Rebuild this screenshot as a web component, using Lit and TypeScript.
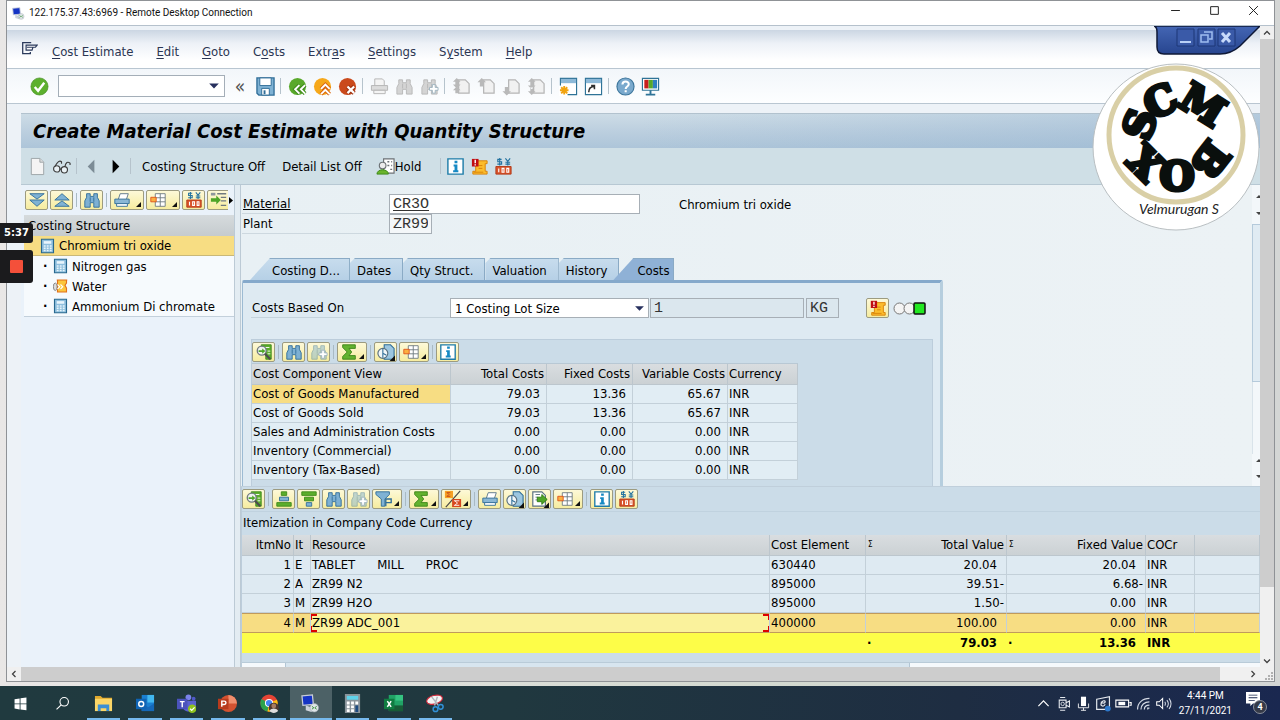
import { LitElement, html, svg, css, nothing } from "lit";
import { customElement, property } from "lit/decorators.js";
import { classMap } from "lit/directives/class-map.js";

/* Icon drawings on a 20 x 20 canvas */
const binoculars = svg`<path d="M4 3h4v3h4V3h4v4l2 4v7h-6v-5H8v5H2v-7l2-4z" fill="#7db0d3" stroke="#2f6d98"/><path d="M8 7v5M12 7v5" stroke="#2f6d98"/>`;
const binocularsOff = svg`<path d="M4 3h4v3h4V3h4v4l2 4v7h-6v-5H8v5H2v-7l2-4z" fill="#d4d4d4" stroke="#b8b8b8"/><path d="M8 7v5M12 7v5" stroke="#b8b8b8"/>`;
const plus = svg`<path d="M13 8h3v3h3v3h-3v3h-3v-3h-3v-3h3z" fill="#fff" stroke="#9fb4c0"/>`;
const scroll = svg`<path d="M8 4h10v3h-2v8h2v3H3v-3h3V9z" fill="#fbbc2c" stroke="#d98208"/><path d="M9 9h4M9 12h4M4 16h10" stroke="#d98208"/><path d="M2 2h7v8H2z" fill="#c00d12"/><path d="M5.500 3v3.500M5.500 7.500v1.500" stroke="#fff" stroke-width="1.500"/>`;
const page = svg`<path d="M7 3h7l4 4v10H7z" fill="#f1f1f1" stroke="#b5b5b5" stroke-width="1.300"/>`;
const coins = svg`<path d="M2 10h16v8H2z" fill="#d9542b" stroke="#b23a18"/><path d="M5 12v4M8.500 12v4h2v-4zM13.500 12v4h2v-4z" fill="none" stroke="#fff" stroke-width="1.200"/><path d="M8 2.500H4v2.500h4v2.500H3.500M6 1v8M12 1.500l2.500 3 2.500-3M14.500 4v5M12 5.500h5M12 7.500h5" fill="none" stroke="#2473a0" stroke-width="1.200"/>`;
const info = svg`<path d="M2 2h16v16H2z" fill="#fff" stroke="#1e7ca8" stroke-width="1.500"/><path d="M9 4h3v2.500H9zM8 8h4v6h1v2H7.500v-2H9v-4H8z" fill="#1689c4"/>`;
const sheet = svg`<path d="M7 3h11v14H7z" fill="#fff"/><path d="M7 3h11v14H7zM7 7.500h11M7 12h11M12.500 3v14" fill="none" stroke="#6e7a80"/><path d="M2 7h6v5H2z" fill="#fbb040" stroke="#e0521c"/>`;
const printer = svg`<path d="M6 9l2-6h9l-2 6" fill="#fff" stroke="#587488"/><path d="M2 9h16v5H2z" fill="#8ab7d5" stroke="#2f6d98"/><path d="M4 14h12v3H4z" fill="#fff" stroke="#2f6d98"/>`;
const sigma = svg`<path d="M3 2h14v4h-7l3 4-3 4h7v4H3v-3l5-5-5-5z" fill="#62b22f" stroke="#3b8418"/>`;

const ICONS: Record<string, unknown> = {
  find: binoculars,
  findOff: binocularsOff,
  findNextOff: svg`${binocularsOff}${plus}`,
  findNext: svg`<g opacity=".45">${binoculars}</g>${plus}`,
  scroll,
  coins,
  info,
  sheet,
  printer,
  sigma,
  menu: svg`<path d="M12 3H2v13h9v-2" fill="none" stroke="#2b3a5c" stroke-width="1.500"/><path d="M6 6h13l-2 2.500h-3l-1 3.500H6zM7 8.500h7" fill="#fff" stroke="#2b3a5c" stroke-width="1.400"/>`,
  ok: svg`<circle cx="10" cy="10" r="9" fill="#5db02e" stroke="#3e8a1a" stroke-width=".7"/><path d="M5 10.500l3.500 4 6.500-8.500" fill="none" stroke="#fff" stroke-width="2.500"/>`,
  save: svg`<path d="M1 1h18v18H3l-2-2z" fill="#7fb2d4" stroke="#2f6d98" stroke-width="1.400"/><path d="M4 1h12v8H4z" fill="#fff" stroke="#2f6d98"/><path d="M6 12h8v7H6z" fill="#fff" stroke="#2f6d98"/><path d="M8 14h2v4H8z" fill="#2f6d98"/>`,
  back: svg`<circle cx="10" cy="10" r="9" fill="#59a92b"/><path d="M12 8.500L7.500 13l4.500 4.500M18 8.500L13.500 13l4.500 4.500" fill="none" stroke="#3e8a1a" stroke-width="4"/><path d="M12 8.500L7.500 13l4.500 4.500M18 8.500L13.500 13l4.500 4.500" fill="none" stroke="#fff" stroke-width="2"/>`,
  exit: svg`<circle cx="10" cy="10" r="9" fill="#f6a81a"/><path d="M8.500 12.500L13 8l4.500 4.500M8.500 18l4.500-4.500 4.500 4.500" fill="none" stroke="#d9660f" stroke-width="4"/><path d="M8.500 12.500L13 8l4.500 4.500M8.500 18l4.500-4.500 4.500 4.500" fill="none" stroke="#fff" stroke-width="2"/>`,
  cancel: svg`<circle cx="10" cy="10" r="9" fill="#ca4a1c"/><path d="M10 10l7 7M17 10l-7 7" stroke="#9c2f0d" stroke-width="4.500"/><path d="M10 10l7 7M17 10l-7 7" stroke="#fff" stroke-width="2.400"/>`,
  printOff: svg`<path d="M5 9V2h8l2 2v5" fill="#f4f4f4" stroke="#b5b5b5"/><path d="M1.500 9h17v5h-17z" fill="#dcdcdc" stroke="#b5b5b5"/><path d="M4 14h12v3.500H4z" fill="#f4f4f4" stroke="#b5b5b5"/>`,
  pageFirst: svg`${page}<path d="M5 1l4 4H6.500v3H9l-4 4-4-4h2.500V5H1zM5 10l4 4H6.500v3h-3v-3H1z" fill="#b9b9b9"/>`,
  pageUp: svg`${page}<path d="M5 1l4.500 4.500H7V10H3V5.500H.5z" fill="#b9b9b9"/>`,
  pageDown: svg`${page}<path d="M5 19.500L.5 15H3v-4.500h4V15h2.500z" fill="#b9b9b9"/>`,
  pageLast: svg`${page}<path d="M5 1l4 4H6.500v4H9l-4 4-4-4h2.500V5H1zM5 19l4-4H6.500v-4h-3v4H1z" fill="#b9b9b9"/>`,
  newSession: svg`<path d="M1.500 1.500h17v17h-17z" fill="#fff" stroke="#2f7397" stroke-width="1.200"/><path d="M2 2h16v4.500H2z" fill="#8db9d8"/><path d="M0 9h9v11H0z" fill="#fff"/><path d="M5.500 9.500v9M1 14h9M2.300 10.800l6.400 6.400M8.700 10.800l-6.400 6.400" stroke="#f1a30f" stroke-width="2"/>`,
  shortcut: svg`<path d="M1.500 1.500h17v17h-17z" fill="#fff" stroke="#2f7397" stroke-width="1.200"/><path d="M2 2h16v4.500H2z" fill="#8db9d8"/><path d="M5 16c0-4 2-6 6-6M7.500 9H11v4" fill="none" stroke="#2d2d2d" stroke-width="1.600"/>`,
  help: svg`<circle cx="10" cy="10" r="9" fill="#7aa9cd" stroke="#3d769c" stroke-width="1.200"/><path d="M6.800 8c0-4.500 6.800-4.200 6.600-.3C13.300 10 10.200 10 10.200 12.500M10.200 14v2" fill="none" stroke="#fff" stroke-width="2.200"/>`,
  monitor: svg`<path d="M1.500 1.500h17V14h-17z" fill="#fff" stroke="#2f7397" stroke-width="1.200"/><path d="M3.500 3h4.500v9H3.500z" fill="#c81e1e"/><path d="M8 3h4.500v9H8z" fill="#57a82a"/><path d="M12.500 3H17v9h-4.500z" fill="#2e7fc0"/><path d="M10 14v3.500M5 18.500h10" stroke="#2f7397" stroke-width="2"/>`,
  newDoc: svg`<path d="M3.500 1.500h9l4 4v13h-13z" fill="#f4f4f4" stroke="#9da4a8"/><path d="M12.500 1.500v4h4" fill="#dcdcdc" stroke="#9da4a8"/>`,
  glasses: svg`<circle cx="5" cy="12.500" r="3.300" fill="#e9f1f5" stroke="#3c3c3c" stroke-width="1.200"/><circle cx="13" cy="13.500" r="3.300" fill="#e9f1f5" stroke="#3c3c3c" stroke-width="1.200"/><path d="M8 12.500l2 .5M3 10c3-5 5-7 7-5v2M13.500 10.500c1-5 3-6 5.500-4v2" fill="none" stroke="#3c3c3c" stroke-width="1.200"/>`,
  prev: svg`<path d="M13 3v14L6 10z" fill="#7c8c96"/>`,
  next: svg`<path d="M7 3v14l7-7z" fill="#000"/>`,
  hold: svg`<path d="M8 2h11v15H8z" fill="#fff" stroke="#6c7175" stroke-width="1.200"/><path d="M12 5h2M16 5h1M12 9h2M16 9h1M15 13h2" stroke="#6c7175" stroke-width="1.500"/><circle cx="7" cy="9" r="3.500" fill="#ececec" stroke="#6c7175" stroke-width="1.200"/><path d="M1 18c0-6 12-6 12 0z" fill="#6ab42d" stroke="#3e8a1a"/>`,
  expand: svg`<path d="M2 3h16l-8 6zM2 10h16l-8 7z" fill="#7fb2d4" stroke="#2f6d98"/>`,
  collapse: svg`<path d="M2 10h16l-8-7zM2 17h16l-8-6z" fill="#7fb2d4" stroke="#2f6d98"/>`,
  treeIn: svg`<path d="M8 3h10M12 7h6M12 11h6M12 16h6" stroke="#707a80" stroke-width="1.500"/><path d="M1 2h5v3H1z" fill="#8d979c"/><path d="M1 8h6V5l5 5-5 5v-3H1z" fill="#4ea527"/>`,
  detail: svg`<path d="M7 2h11v16h-6V9H7z" fill="#5cae2c" stroke="#3e8a1a"/><path d="M10 5h6M14 9h3M14 12h3" stroke="#fff"/><circle cx="7.500" cy="8.500" r="5" fill="#eef3ee" stroke="#707a80" stroke-width="1.500"/><path d="M4 8h4V6l3.500 3L8 12v-2H4z" fill="#4ea527"/><path d="M11 12l6 6" stroke="#4d4d4d" stroke-width="2.500"/>`,
  sortAsc: svg`<path d="M7 2h6v4H7z" fill="#5cae2c" stroke="#3e8a1a"/><path d="M5 8h10v4H5z" fill="#7fb2d4" stroke="#2f6d98"/><path d="M2 14h16v4H2z" fill="#5cae2c" stroke="#3e8a1a"/>`,
  sortDesc: svg`<path d="M2 2h16v4H2z" fill="#5cae2c" stroke="#3e8a1a"/><path d="M5 8h10v4H5z" fill="#5cae2c" stroke="#3e8a1a"/><path d="M7 14h6v4H7z" fill="#7fb2d4" stroke="#2f6d98"/>`,
  filter: svg`<path d="M1 2h15v3l-5 5v8H7v-8L1 5z" fill="#7fb2d4" stroke="#2f6d98"/><path d="M12 18v-8h6v4h-6" fill="none" stroke="#2f6d98" stroke-width="1.500"/>`,
  subtotal: svg`<path d="M1 1h9v8H1z" fill="#f6a025"/><path d="M3 3h4M3 7h4M3.500 3l2 2-2 2" stroke="#c0401b" fill="none"/><path d="M2 19L18 1" stroke="#444" stroke-width="1.300"/><path d="M9 10h10v9H9z" fill="#d6481f"/><path d="M11 12h6M11 17h6M12 12l3 2.500-3 2.500" stroke="#fff" fill="none"/>`,
  view: svg`<path d="M8 2h7l4 4v12H8z" fill="#9cc6e0" stroke="#2f6d98" stroke-width="1.200"/><circle cx="6.500" cy="11.500" r="5.500" fill="#f2f7f9" stroke="#5a7180" stroke-width="1.300"/><path d="M6.500 11.500V6.500M6.500 11.500l4 2M6.500 11.500v5" stroke="#2f6d98" stroke-width="1.200"/><path d="M20 14v6h-6z" fill="#111"/>`,
  exportFile: svg`<path d="M2 2h10l4 4v12H2z" fill="#fff" stroke="#5a7180" stroke-width="1.300"/><path d="M5 5h5M5 8h3M5 11h3" stroke="#5a7180"/><path d="M7 8h5V5l6 5.500-6 5.500v-3H7z" fill="#4ea527" stroke="#2f7d10"/><path d="M20 14v6h-6z" fill="#111"/>`,
  calc: svg`<path d="M2 1h16v18H2z" fill="#8fbfdd" stroke="#27688f" stroke-width="1.500"/><path d="M5 3.500h10V7H5z" fill="#e8f5fc"/><path d="M5 9h2.500v2H5zM9 9h2.500v2H9zM13 9h2.500v2H13zM5 12h2.500v2H5zM9 12h2.500v2H9zM13 12h2.500v2H13zM5 15h2.500v2H5zM9 15h2.500v2H9zM13 15h2.500v2H13z" fill="#e8f5fc"/>`,
  water: svg`<path d="M5 2h14M6 2h12v4l-2 3 2 4v5H6z" fill="#fbc63d" stroke="#e2701a" stroke-width="1.500"/><ellipse cx="3" cy="11" rx="2.500" ry="5" fill="#dcdcdc" stroke="#6d6d6d"/><path d="M6 8l3 3-3 3M10 8l3 3-3 3" fill="none" stroke="#fff" stroke-width="1.500"/>`,
  rdp: svg`<path d="M1 2l11-1 1 10-11 1z" fill="#1534c4" stroke="#c8cdd8" stroke-width="1.300"/><path d="M5 12l9 3-3 4-6-2z" fill="#cfd4dc"/><circle cx="14" cy="14.500" r="4.500" fill="#dfe5e8" stroke="#9aa3ab" stroke-width=".6"/><path d="M11.500 13l2 1.500-2 1.500M16.500 13l-2 1.500 2 1.500" fill="none" stroke="#3a8f3a"/>`,
  start: svg`<path d="M3 5l6-1v6H3zM10 3.800L17 3v7h-7zM3 11h6v6l-6-1zM10 11h7v7l-7-.9z" fill="#fff"/>`,
  search: svg`<circle cx="12" cy="8" r="5" fill="none" stroke="#fff" stroke-width="1.300"/><path d="M8.500 11.500L3 17" stroke="#fff" stroke-width="1.300"/>`,
  explorer: svg`<path d="M1 2h6l2 2h10v4H1z" fill="#e0a92e"/><path d="M1 5h18v13H1z" fill="#fbd667"/><path d="M4 18v-7h12v7h-3v-3H7v3z" fill="#3b8fd4"/>`,
  outlook: svg`<path d="M6 1h13v17H6z" fill="#1a7fd0"/><path d="M12 1h7v8h-7z" fill="#41b7ef"/><path d="M6 10l7 4 6-4v8H6z" fill="#1568b8"/><path d="M0 5h11v11H0z" fill="#0f64b4"/><circle cx="5.500" cy="10.500" r="2.600" fill="none" stroke="#fff" stroke-width="1.500"/>`,
  teams: svg`<circle cx="12" cy="3.500" r="3" fill="#7b83eb"/><circle cx="17.500" cy="5" r="2" fill="#5059c9"/><path d="M7 7h13v8c-3 4-10 5-13 1z" fill="#5b62cf"/><path d="M0 5h11v11H0z" fill="#4b53bc"/><path d="M3 8h5M5.500 8v6" stroke="#fff" stroke-width="1.500"/><circle cx="16" cy="15.500" r="4.500" fill="#8fc31f"/><path d="M13.800 15.500l1.700 1.700 3-3.200" fill="none" stroke="#fff" stroke-width="1.300"/>`,
  powerpoint: svg`<circle cx="11" cy="10" r="9" fill="#d35230"/><path d="M11 1a9 9 0 019 9h-9z" fill="#f08f6d"/><path d="M0 5h11v11H0z" fill="#b83b1d"/><path d="M4 13.500v-6h2.500c2.500 0 2.500 3.500 0 3.500H4" fill="none" stroke="#fff" stroke-width="1.500"/>`,
  chrome: svg`<circle cx="9.500" cy="9.500" r="9" fill="#e64435"/><path d="M9.500 9.500L1.500 5.200A9 9 0 008 18.500z" fill="#2ba24c"/><path d="M9.500 9.500L17.800 6A9 9 0 018 18.500z" fill="#fbc116"/><circle cx="9.500" cy="9.500" r="4.300" fill="#fff"/><circle cx="9.500" cy="9.500" r="3.300" fill="#4184f3"/><circle cx="14.500" cy="14.500" r="5.300" fill="#4b382f"/><circle cx="14.500" cy="12.500" r="2.500" fill="#a67c62"/><path d="M10 17.500c2-3 7-3 9 0a5.300 5.300 0 01-9 0z" fill="#ddd"/>`,
  calculator: svg`<path d="M2 0h16v20H2z" fill="#8a949b"/><path d="M4 2h12v4H4z" fill="#5fd3ea"/><path d="M4 8h3v3H4zM8.500 8h3v3h-3zM13 8h3v3h-3zM4 12h3v3H4zM8.500 12h3v3h-3zM4 16h3v3H4zM8.500 16h3v3h-3z" fill="#fff"/><path d="M13 12h3v7h-3z" fill="#1d4a80"/>`,
  excel: svg`<path d="M5 1h15v17H5z" fill="#21a366"/><path d="M12 1h8v6h-8z" fill="#35c481"/><path d="M5 12h15v6H5z" fill="#185c37"/><path d="M0 5h11v11H0z" fill="#107c41"/><path d="M3.500 7.500l4 6M7.500 7.500l-4 6" stroke="#fff" stroke-width="1.600"/>`,
  snip: svg`<ellipse cx="9" cy="6" rx="8.500" ry="4.500" transform="rotate(-15 9 6)" fill="#f3f3f3" stroke="#d12a3c" stroke-width="1.200"/><path d="M6 3l7 9M12 3l-3 9" stroke="#b0b6bd" stroke-width="1.500"/><circle cx="10" cy="16" r="2.500" fill="none" stroke="#3190d6" stroke-width="1.600"/><circle cx="15.500" cy="13.500" r="2.500" fill="none" stroke="#3190d6" stroke-width="1.600"/>`,
  up: svg`<path d="M4 13l6-6 6 6" fill="none" stroke="#fff" stroke-width="1.400"/>`,
  camera: svg`<path d="M5 6h8v9H5zM13 9l4-2v7l-4-2M6 3h6M6 18h6" fill="none" stroke="#e4e8ee" stroke-width="1.300"/><circle cx="9" cy="10.500" r="2" fill="none" stroke="#e4e8ee"/>`,
  mic: svg`<path d="M7 2h6v11H7z" fill="#fff"/><path d="M4 10v5h12v-5M10 15v3M7 18h6" fill="none" stroke="#fff"/>`,
  pen: svg`<path d="M2 5l15-3v15H2z" fill="none" stroke="#e4e8ee" stroke-width="1.400"/><path d="M7 12c0-6 5-6 5-4s-4 2-5 0M7 12c2 2 4 1 5-1" fill="none" stroke="#e4e8ee" stroke-width="1.400"/><circle cx="15" cy="16" r="3.500" fill="#2e79cc"/>`,
  battery: svg`<path d="M1 6h15v8H1zM17 9h2v3h-2" fill="none" stroke="#fff" stroke-width="1.300"/><path d="M4 8h8v4H4z" fill="#fff"/>`,
  wifi: svg`<path d="M3 17C3 9 9 4 17 4M7 17c0-5 4-9 10-9M11 17c0-3 2-5 6-5M15 17v-1.500h2" fill="none" stroke="#d4dae4" stroke-width="1.400"/>`,
  sound: svg`<path d="M2 8h3l4-4v12l-4-4H2z" fill="none" stroke="#fff" stroke-width="1.200"/><path d="M11.500 8c1 1.500 1 3 0 4.500M14 6c2 2.500 2 6 0 8.500M16.500 4c3 4 3 8.500 0 12.500" fill="none" stroke="#d4dae4" stroke-width="1.200"/>`,
  chevUp: svg`<path d="M4 13l6-6 6 6" fill="none" stroke="#404040" stroke-width="2.500"/>`,
  chevDown: svg`<path d="M4 7l6 6 6-6" fill="none" stroke="#404040" stroke-width="2.500"/>`,
  chevLeft: svg`<path d="M13 4l-6 6 6 6" fill="none" stroke="#404040" stroke-width="2.500"/>`,
  chevRight: svg`<path d="M7 4l6 6-6 6" fill="none" stroke="#404040" stroke-width="2.500"/>`,
  caret: svg`<path d="M2 6h16l-8 8z" fill="#27305e"/>`,
  minimize: svg`<path d="M2 10h16" stroke="#222" stroke-width="1.800"/>`,
  maximize: svg`<path d="M3 3h14v14H3z" fill="none" stroke="#222" stroke-width="1.800"/>`,
  close: svg`<path d="M2 2l16 16M18 2L2 18" stroke="#222" stroke-width="1.800"/>`,
};

@customElement("sap-icon")
class SapIcon extends LitElement {
  @property() name = "";
  static styles = css`
    :host { display: inline-flex; width: 18px; height: 18px; flex: none; }
    svg { display: block; width: 100%; height: 100%; }
  `;
  render() {
    return html`<svg viewBox="0 0 20 20" aria-hidden="true">${ICONS[this.name] ?? nothing}</svg>`;
  }
}

/* Yellow tool buttons; "|" is a divider, a trailing "+" adds the drop-down corner */
@customElement("grid-tools")
class GridTools extends LitElement {
  @property({ type: Array }) items: string[] = [];
  static styles = css`
    :host { display: flex; align-items: center; gap: 2px; min-width: 0; overflow: hidden; }
    .tool {
      display: flex; align-items: center; justify-content: flex-start; flex: none; position: relative;
      width: 23px; height: 20px; padding: 0 2px; box-sizing: border-box;
      background: linear-gradient(#fdf9d8, #f6ec9f); border: 1px solid #9c9b80; border-radius: 2px;
    }
    .menu { width: var(--menu-width, 30px); }
    .corner { position: absolute; right: 2px; bottom: 2px; width: 5px; height: 5px; fill: #111; }
    .divider { width: 1px; height: 14px; margin: 0 1px; background: #a9bac4; flex: none; }
  `;
  render() {
    return this.items.map((raw) => {
      if (raw === "|") return html`<span class="divider"></span>`;
      const menu = raw.endsWith("+");
      const name = menu ? raw.slice(0, -1) : raw;
      return html`<button class=${classMap({ tool: true, menu })} aria-label=${name}>
        <sap-icon name=${name}></sap-icon>
        ${menu ? html`<svg class="corner" viewBox="0 0 5 5"><path d="M5 0v5H0z" /></svg>` : nothing}
      </button>`;
    });
  }
}

const MENUS: [string, string, string][] = [
  ["", "C", "ost Estimate"], ["", "E", "dit"], ["", "G", "oto"], ["C", "o", "sts"],
  ["Extr", "a", "s"], ["", "S", "ettings"], ["S", "y", "stem"], ["", "H", "elp"],
];
const STANDARD = ["save", "|", "back", "exit", "cancel", "|", "printOff", "findOff", "findNextOff", "|",
  "pageFirst", "pageUp", "pageDown", "pageLast", "|", "newSession", "shortcut", "|", "help", "monitor"];
const COMPONENTS = [
  ["Cost of Goods Manufactured", "79.03", "13.36", "65.67"],
  ["Cost of Goods Sold", "79.03", "13.36", "65.67"],
  ["Sales and Administration Costs", "0.00", "0.00", "0.00"],
  ["Inventory (Commercial)", "0.00", "0.00", "0.00"],
  ["Inventory (Tax-Based)", "0.00", "0.00", "0.00"],
];
const ITEMS = [
  ["1", "E", ["TABLET", "MILL", "PROC"], "630440", "20.04", "20.04"],
  ["2", "A", ["ZR99 N2"], "895000", "39.51-", "6.68-"],
  ["3", "M", ["ZR99 H2O"], "895000", "1.50-", "0.00"],
  ["4", "M", ["ZR99 ADC_001"], "400000", "100.00", "0.00"],
] as [string, string, string[], string, string, string][];
const APPS = ["start", "search", "explorer", "outlook", "teams", "powerpoint", "chrome", "rdp", "calculator", "excel", "snip"];

@customElement("app-root")
class AppRoot extends LitElement {
  static styles = css`
    :host {
      display: flex; flex-direction: column; height: 100vh; overflow: hidden; position: relative;
      font: 13px/19px "DejaVu Sans Condensed", "Noto Sans", sans-serif; color: #000;
    }
    * { box-sizing: border-box; }
    button, input, select { font: inherit; color: inherit; margin: 0; }
    button { background: none; border: 0; padding: 0; white-space: nowrap; }
    table { border-collapse: separate; border-spacing: 0; table-layout: fixed; }
    th { font-weight: 400; text-align: left; }

    .desktop { flex: 1; min-height: 0; display: flex; padding: 0 5px 4px 6px; background: linear-gradient(90deg, #e9e7e6, #d3d9d0 60%, #d4d6d5); }
    .window { flex: 1; min-width: 0; display: flex; flex-direction: column; background: #fff; border: 1px solid #8f9296; }
    .titlebar { display: flex; align-items: center; gap: 4px; height: 25px; padding: 0 15px 0 5px; font: 10px/16px Roboto, sans-serif; color: #111; flex: none; border-bottom: 1px solid #b5c1cc; }
    .titlebar sap-icon { width: 13px; height: 13px; }
    .titlebar .name { flex: 1; }
    .winbtns { display: flex; gap: 28px; }
    .winbtns sap-icon { width: 11px; height: 11px; }
    .client { flex: 1; min-height: 0; display: grid; grid-template: minmax(0, 1fr) 14px / minmax(0, 1fr) 14px; }
    .session { display: flex; flex-direction: column; min-height: 0; padding-top: 4px; background: #edf2f7; position: relative; }

    .bar { display: flex; flex-direction: column; align-items: center; background: #f0f0f0; }
    .bar sap-icon { width: 10px; height: 10px; }
    .arrow { display: flex; align-items: center; justify-content: center; width: 14px; height: 13px; flex: none; }
    .thumb { width: 100%; flex: 546; background: #cdcdcd; }
    .rest { flex: 67; }
    .hbar { flex-direction: row; }
    .hbar .thumb { height: 100%; width: auto; flex: 1200; }
    .hbar .rest { flex: 26; }
    .grip { display: flex; align-items: flex-end; justify-content: flex-end; background: #f0f0f0; }
    .grip svg { width: 9px; height: 9px; fill: #b0b0b0; }

    .menubar { display: flex; align-items: center; gap: 23px; height: 38px; padding: 5px 14px 0; flex: none; background: linear-gradient(#cbd6e3, #edf1f7 35%, #fff 80%); color: #2b3552; }
    .menubar u { text-underline-offset: 2px; }
    .menubar sap-icon { width: 17px; height: 17px; }
    .menubar .sysmenu { display: flex; margin: 0 -9px 6px 0; }
    .standard { display: flex; align-items: center; gap: 5px; height: 36px; padding: 0 22px; flex: none; border: solid #b9c6d1; border-width: 1px 0; background: linear-gradient(#f2f6fa, #fdfeff); }
    .standard button { display: flex; justify-content: center; width: 20px; }
    .standard sap-icon { width: 19px; height: 19px; }
    .line { width: 1px; height: 16px; background: #b6c3cc; flex: none; }
    .standard .line { margin-right: 1px; }
    .command { display: flex; align-items: center; width: 167px; height: 22px; margin-left: 4px; border: 1px solid #a4aeb8; background: #fff; }
    .command input { flex: 1; min-width: 0; border: 0; background: none; outline: 0; }
    .command sap-icon { width: 12px; height: 12px; }
    .standard .hide { font-size: 19px; color: #555; }

    .page { flex: 1; min-height: 0; display: flex; flex-direction: column; margin: 9px 0 0 14px; }
    h1 { margin: 0; height: 35px; padding: 0 12px; flex: none; white-space: nowrap; overflow: hidden; font: italic 700 20px/34px "DejaVu Sans Condensed", "Noto Sans", sans-serif; background: linear-gradient(90deg, transparent 50%, #8fb0cf66), linear-gradient(#cddce6, #bccfdf 50%, #adc5d9); border-top: 1px solid #b2c2ce; }
    .apptools { display: flex; align-items: center; gap: 5px; height: 37px; padding: 0 7px; flex: none; background: #cfdfe6; border-bottom: 1px solid #b7c8d3; }
    .apptools button { display: flex; align-items: center; justify-content: center; min-width: 19px; }
    .apptools sap-icon { width: 19px; height: 19px; }
    .apptools .word { margin: 0 6px; }
    .apptools .held { margin-left: 3px; }
    .apptools .gapped { margin-left: 14px; }

    .main { flex: 1; min-height: 0; display: grid; grid-template-columns: 213px 7px minmax(0, 1fr); background: #e8f0f4; }
    .side { display: flex; flex-direction: column; padding-left: 3px; background: #eaf2fa; min-height: 0; }
    .sidetools { display: flex; align-items: center; height: 30px; padding: 0 1px; flex: none; --menu-width: 34px; }
    .sidetools grid-tools { flex: 1; }
    .more { width: 5px; height: 7px; flex: none; }
    .tree { margin: 0; padding: 0; list-style: none; background: #f6fafd; border-bottom: 1px solid #c3d0db; }
    .tree li { display: flex; align-items: center; gap: 4px; height: 20px; padding-left: 16px; white-space: nowrap; }
    .tree li.child { padding-left: 19px; }
    .tree sap-icon { width: 15px; height: 16px; }
    .tree .bullet { width: 6px; font-weight: 700; line-height: 14px; }
    .tree li.head { height: 21px; background: linear-gradient(#d6dbdd, #c5cbce); padding-left: 4px; }
    .tree .root { background: #f7dd83; border-bottom: 1px solid #c9b878; }
    .split { border: solid #bccad5; border-width: 0 1px; background: #e3ecf2; }

    .work { display: flex; flex-direction: column; min-width: 0; min-height: 0; }
    .upper { display: flex; height: 302px; flex: none; border-bottom: 1px solid #c0cfdb; }
    .top { flex: 1; min-width: 0; padding: 9px 1px 0; display: flex; flex-direction: column; background: linear-gradient(90deg, #e8f0f4, #ecf2f5); }
    .inner { width: 8px; display: flex; flex-direction: column; padding-top: 7px; background: #f3f7fa; overflow: hidden; }
    .inner svg { width: 10px; height: 32px; flex: none; }
    .inner .slot { height: 158px; border: solid #b5cadb; border-width: 1px 0 1px 1px; background: #e0ebf3; }
    .inner .gap { flex: 1; border-left: 1px solid #d9e3ea; }
    .field { display: flex; align-items: center; height: 20px; }
    .field label { width: 147px; border-bottom: 1px solid #cdd8df; padding-left: 1px; }
    .entry { height: 20px; padding: 0 3px; border: 1px solid #a7afb6; border-radius: 0; background: #fff; font-family: "Liberation Mono", monospace; font-size: 15px; color: #333; }
    .material { width: 251px; text-decoration: underline; text-underline-offset: 2px; }
    .plant { width: 43px; background: #f4f7f9; }
    .after { margin-left: 39px; }

    .tabs { display: flex; height: 22px; margin: 24px 0 0 8px; flex: none; }
    .tab { height: 22px; padding: 1px 11px 0 7px; background: linear-gradient(#c7dced, #b6d0e6); border: solid #8aaac5; border-width: 1px 1px 0 0; clip-path: polygon(0 5px, 5px 0, 100% 0, 100% 100%, 0 100%); }
    .tab.slant { padding: 1px 9px 0 22px; clip-path: polygon(20px 0, 100% 0, 100% 100%, 0 100%); }
    .tab.active { margin-left: -6px; padding: 1px 4px 0 24px; background: #8fb1d6; }
    .panel { flex: 1; min-height: 0; width: 100%; max-width: 701px; padding: 15px 7px 0 8px; border: solid; border-width: 3px 3px 0 1px; border-color: #85a9cb #b6cede #b6cede #9dbbd3; background: #deeaf2; display: flex; flex-direction: column; border-radius: 2px 2px 0 0; }
    .basis { display: flex; align-items: center; height: 20px; margin-bottom: 21px; flex: none; }
    .basis label { width: 199px; border-bottom: 1px solid #c5d3dc; padding-left: 1px; }
    .pick { position: relative; width: 199px; height: 20px; margin-right: 1px; }
    .pick select { appearance: none; width: 100%; height: 20px; padding: 0 4px; border: 1px solid #a7afb6; border-radius: 0; background: #fff; }
    .pick sap-icon { position: absolute; right: 4px; top: 5px; width: 11px; height: 11px; pointer-events: none; }
    .qty { width: 154px; background: #dbe7ee; margin-right: 2px; }
    .unit { width: 33px; background: #dbe7ee; margin-right: 27px; }
    .lights { width: 33px; height: 13px; margin-left: 4px; }

    .grid { flex: 1; min-height: 0; overflow: hidden; background: #cbdce8; border: 1px solid #bccddb; border-bottom: 0; }
    .grid grid-tools { height: 23px; }
    .num { text-align: right; }
    .components { width: 546px; border-top: 1px solid #b8c8d4; }
    .components th, .components td, .items th, .items td { overflow: hidden; white-space: nowrap; height: 19px; line-height: 18px; padding: 0 2px 0 1px; border: solid #c3d0d9; border-width: 0 1px 1px 0; }
    .components th, .items th { height: 21px; line-height: 20px; background: linear-gradient(#d9dde0, #cbd1d4); border-color: #bcc6cd; }
    .components td { background: #e1edf4; }
    .components td.num { padding-right: 6px; }
    .components td.hot { background: #f7dd83; }
    .c1 { width: 199px; } .c2 { width: 96px; } .c3 { width: 86px; } .c4 { width: 95px; }

    .bottom { flex: 1; min-height: 0; display: flex; flex-direction: column; background: #cbdce8; border-left: 1px solid #bccddb; overflow: hidden; }
    .bottom grid-tools { height: 24px; flex: none; }
    .caption { height: 24px; line-height: 22px; padding-left: 1px; border-top: 1px solid #c0d2df; flex: none; }
    .items { width: 100%; }
    .i1 { width: 52px; } .i2 { width: 17px; } .i3 { width: 459px; } .i4 { width: 96px; } .i5 { width: 141px; } .i6 { width: 139px; } .i7 { width: 49px; }
    .items td { background: #deeaf2; }
    .items td.num.val { padding-right: 9px; }
    .items td.num.neg { padding-right: 2px; }
    .sumhead { display: flex; justify-content: space-between; }
    .sumhead small { font-size: 8px; padding-left: 1px; }
    .words { display: flex; gap: 22px; }
    .items tr.chosen td { height: 20px; background: #f7dd83; border-bottom-color: #c09a5c; border-top: 1px solid #c09a5c; }
    .items tr.chosen td.cursor { background: linear-gradient(#d00, #d00) 0 0 / 6px 2px, linear-gradient(#d00, #d00) 0 0 / 1px 6px, linear-gradient(#d00, #d00) 0 100% / 6px 2px, linear-gradient(#d00, #d00) 0 100% / 1px 6px, linear-gradient(#d00, #d00) 100% 0 / 6px 2px, linear-gradient(#d00, #d00) 100% 0 / 1px 6px, linear-gradient(#d00, #d00) 100% 100% / 6px 2px, linear-gradient(#d00, #d00) 100% 100% / 1px 6px, #faf29c; background-repeat: no-repeat; }
    .items tr.total td { height: 20px; background: #fdfd48; border-color: #fdfd48; font-weight: 700; }
    .track { display: flex; height: 5px; margin-top: auto; background: #f5f9fc; border-top: 1px solid #b9cbd8; flex: none; }
    .track i { margin-left: 43px; width: 625px; background: #d7e5ef; border: solid #b3c6d5; border-width: 0 1px; }

    .mdi { position: absolute; top: 0; right: 0; width: 106px; height: 30px; }
    .brand { position: absolute; top: 36px; right: 0; width: 168px; height: 170px; }
    .brand .letter { font: 900 40px "DejaVu Serif", serif; text-anchor: middle; fill: #0a0f0d; stroke: #0a0f0d; stroke-width: 4px; }
    .brand .owner { font: italic 14px Lato, sans-serif; text-anchor: middle; fill: #222; }
    .recorder { position: absolute; left: 0; top: 223px; width: 33px; display: flex; flex-direction: column; gap: 7px; }
    .time { height: 20px; background: #1b1b1d; color: #fff; border-radius: 0 3px 3px 0; font: 700 10px/20px "DejaVu Sans", sans-serif; text-align: center; }
    .stop { display: flex; align-items: center; justify-content: center; height: 33px; background: #1b1b1d; border-radius: 0 3px 3px 0; }
    .stop i { width: 13px; height: 13px; background: #f4503a; border-radius: 1px; }

    .taskbar { display: flex; justify-content: space-between; height: 34px; flex: none; background: linear-gradient(90deg, #203a3f, #20383f 40%, #1e2d42 75%, #1a2850); color: #fff; }
    .apps { display: grid; grid-template-columns: repeat(11, 1fr); width: 456px; }
    .app { display: flex; align-items: center; justify-content: center; }
    .app sap-icon { width: 19px; height: 19px; }
    .app.glyph sap-icon { width: 17px; height: 17px; }
    .app.open { box-shadow: inset 0 -2px #76b9ed; margin: 0 4px; }
    .app.current { background: #4c6166; margin: 0; }
    .tray { display: flex; align-items: center; gap: 3px; padding-right: 13px; }
    .tray sap-icon { width: 17px; height: 17px; }
    .clock { margin: 0 10px 0 4px; font: 10px/15px Roboto, sans-serif; text-align: center; }
    .notes { position: relative; width: 22px; height: 22px; }
    .notes svg { width: 16px; height: 14px; fill: #fff; }
    .badge { position: absolute; right: 0; bottom: 0; width: 14px; height: 14px; border-radius: 50%; background: #353a48; border: 1px solid #8b909c; font: 700 9px/12px Roboto, sans-serif; text-align: center; }
  `;

  private brand() {
    const letters: [string, number, number, number][] = [
      ["S", 47, 62, -72], ["C", 68, 38, -24], ["M", 111, 42, 32],
      ["B", 119, 98, 128], ["O", 85, 114, 180], ["X", 53, 101, 225],
    ];
    return html`<svg class="brand" viewBox="0 0 168 170" role="img" aria-label="SCM BOX">
      <circle cx="84" cy="85" r="83" fill="#fff" stroke="#b9bfc2" stroke-width="1" />
      <circle cx="84" cy="73" r="67" fill="none" stroke="#d9cfa6" stroke-width="5" />
      ${letters.map(([c, x, y, r]) => svg`<g transform="translate(${x} ${y}) rotate(${r})"><text class="letter" y="15">${c}</text></g>`)}
      <text class="owner" x="87" y="152">Velmurugan S</text>
    </svg>`;
  }

  private mdi() {
    return html`<svg class="mdi" viewBox="0 0 106 30">
      <defs><linearGradient id="blue" x1="0" y1="0" x2="0" y2="1"><stop offset="0" stop-color="#4466b4" /><stop offset="1" stop-color="#27458f" /></linearGradient></defs>
      <path d="M0 0h106L86 20q-9 8-20 8H10q-7 0-7-7V6Q3 1 0 0z" fill="url(#blue)" stroke="#0e1836" stroke-width="1.500" />
      <path d="M23 3h17v17H23zM44 3h17v17H44zM64 3h17v17H64z" fill="#3a5aa8" stroke="#1d3677" />
      <path d="M26 16h11" stroke="#b9d0f6" stroke-width="2" />
      <path d="M50 6h8v7h-3M47 9h7v7h-7z" fill="none" stroke="#9fbdf0" stroke-width="1.500" />
      <path d="M68 7l8 9M76 7l-8 9" stroke="#c7dafa" stroke-width="3" />
    </svg>`;
  }

  private sidebar() {
    return html`<aside class="side">
      <div class="sidetools">
        <grid-tools .items=${["expand", "collapse", "|", "find", "|", "printer+", "sheet+", "coins", "treeIn"]}></grid-tools>
        <svg class="more" viewBox="0 0 5 7"><path d="M1 0l4 3.500L1 7z" /></svg>
      </div>
      <ul class="tree">
        <li class="head">Costing Structure</li>
        <li class="root"><sap-icon name="calc"></sap-icon>Chromium tri oxide</li>
        <li class="child"><span class="bullet">·</span><sap-icon name="calc"></sap-icon>Nitrogen gas</li>
        <li class="child"><span class="bullet">·</span><sap-icon name="water"></sap-icon>Water</li>
        <li class="child"><span class="bullet">·</span><sap-icon name="calc"></sap-icon>Ammonium Di chromate</li>
      </ul>
    </aside>`;
  }

  private costs() {
    return html`<div class="upper"><section class="top">
      <div class="field"><label for="material"><u>Material</u></label><input id="material" class="entry material" value="CR3O" /><span class="after">Chromium tri oxide</span></div>
      <div class="field"><label for="plant">Plant</label><input id="plant" class="entry plant" value="ZR99" /></div>
      <nav class="tabs">
        <button class="tab slant">Costing D...</button><button class="tab">Dates</button><button class="tab">Qty Struct.</button><button class="tab">Valuation</button><button class="tab">History</button><button class="tab slant active">Costs</button>
      </nav>
      <div class="panel">
        <div class="basis">
          <label for="basis">Costs Based On</label>
          <span class="pick"><select id="basis"><option>1 Costing Lot Size</option></select><sap-icon name="caret"></sap-icon></span>
          <input class="entry qty" aria-label="Quantity" value="1" readonly /><input class="entry unit" aria-label="Unit" value="KG" readonly />
          <grid-tools .items=${["scroll"]}></grid-tools>
          <svg class="lights" viewBox="0 0 33 13"><circle cx="6.500" cy="6.500" r="5.500" fill="#f4f4f4" stroke="#777" /><circle cx="16.500" cy="6.500" r="5.500" fill="#f4f4f4" stroke="#777" /><rect x="21" y="1" width="11" height="11" rx="1" fill="#22e822" stroke="#111" stroke-width="1.500" /></svg>
        </div>
        <div class="grid">
          <grid-tools .items=${["detail", "|", "find", "findNext", "|", "sigma+", "|", "view", "sheet+", "|", "info"]}></grid-tools>
          <table class="components">
            <thead><tr><th class="c1">Cost Component View</th><th class="c2 num">Total Costs</th><th class="c3 num">Fixed Costs</th><th class="c4 num">Variable Costs</th><th>Currency</th></tr></thead>
            <tbody>${COMPONENTS.map((r, i) => html`<tr><td class=${classMap({ hot: i === 0 })}>${r[0]}</td><td class="num">${r[1]}</td><td class="num">${r[2]}</td><td class="num">${r[3]}</td><td>INR</td></tr>`)}</tbody>
          </table>
        </div>
      </div>
    </section>
    <div class="inner">
      <svg viewBox="0 0 10 32"><path d="M4 6l3-3 3 3zM4 20h6l-3 3z" fill="#444" /></svg>
      <span class="slot"></span><span class="gap"></span>
      <svg viewBox="0 0 10 32"><path d="M4 8l3-3 3 3zM4 21h6l-3 3z" fill="#444" /></svg>
    </div></div>`;
  }

  private itemization() {
    const amount = (v: string) => html`<td class=${classMap({ num: true, val: true, neg: v.endsWith("-") })}>${v}</td>`;
    const mark = html`<small>Σ</small>`;
    return html`<section class="bottom">
      <grid-tools .items=${["detail", "|", "sortAsc", "sortDesc", "find", "findNext", "filter+", "|", "sigma+", "subtotal+", "|", "printer", "view", "exportFile", "sheet+", "|", "info", "coins"]}></grid-tools>
      <div class="caption">Itemization in Company Code Currency</div>
      <table class="items">
        <thead><tr><th class="i1 num">ItmNo</th><th class="i2">It</th><th class="i3">Resource</th><th class="i4">Cost Element</th>
          <th class="i5"><span class="sumhead">${mark}Total Value</span></th><th class="i6"><span class="sumhead">${mark}Fixed Value</span></th><th class="i7">COCr</th><th></th></tr></thead>
        <tbody>
          ${ITEMS.map((r, i) => html`<tr class=${classMap({ chosen: i === 3 })}><td class="num">${r[0]}</td><td>${r[1]}</td>
            <td class=${classMap({ cursor: i === 3 })}><span class="words">${r[2].map((w) => html`<span>${w}</span>`)}</span></td>
            <td>${r[3]}</td>${amount(r[4])}${amount(r[5])}<td>INR</td><td></td></tr>`)}
          <tr class="total"><td colspan="4"></td><td class="num val"><span class="sumhead"><span>·</span>79.03</span></td><td class="num val"><span class="sumhead"><span>·</span>13.36</span></td><td>INR</td><td></td></tr>
        </tbody>
      </table>
      <div class="track"><i></i></div>
    </section>`;
  }

  render() {
    return html`
      <div class="desktop">
        <div class="window">
          <header class="titlebar">
            <sap-icon name="rdp"></sap-icon><span class="name">122.175.37.43:6969 - Remote Desktop Connection</span>
            <span class="winbtns">${["minimize", "maximize", "close"].map((n) => html`<button aria-label=${n}><sap-icon name=${n}></sap-icon></button>`)}</span>
          </header>
          <div class="client">
            <main class="session">
              <nav class="menubar"><button class="sysmenu" aria-label="Menu"><sap-icon name="menu"></sap-icon></button>${MENUS.map(([a, k, b]) => html`<button>${a}<u>${k}</u>${b}</button>`)}</nav>
              <div class="standard">
                <button aria-label="Enter"><sap-icon name="ok"></sap-icon></button>
                <span class="command"><input aria-label="Command" /><button aria-label="History"><sap-icon name="caret"></sap-icon></button></span>
                <button class="hide">«</button>
                ${STANDARD.map((n) => n === "|" ? html`<span class="line"></span>` : html`<button aria-label=${n}><sap-icon name=${n}></sap-icon></button>`)}
              </div>
              <div class="page">
                <h1>Create Material Cost Estimate with Quantity Structure</h1>
                <div class="apptools">
                  <button aria-label="New"><sap-icon name="newDoc"></sap-icon></button><button aria-label="Display"><sap-icon name="glasses"></sap-icon></button><span class="line"></span>
                  <button aria-label="Previous"><sap-icon name="prev"></sap-icon></button><button aria-label="Next"><sap-icon name="next"></sap-icon></button><span class="line"></span>
                  <button class="word">Costing Structure Off</button><button class="word">Detail List Off</button><button class="held"><sap-icon name="hold"></sap-icon>Hold</button>
                  <span class="line gapped"></span>
                  ${["info", "scroll", "coins"].map((n) => html`<button aria-label=${n}><sap-icon name=${n}></sap-icon></button>`)}
                </div>
                <div class="main">${this.sidebar()}<div class="split"></div><div class="work">${this.costs()}${this.itemization()}</div></div>
              </div>
              ${this.mdi()}${this.brand()}
            </main>
            <div class="bar"><span class="arrow"><sap-icon name="chevUp"></sap-icon></span><span class="thumb"></span><span class="rest"></span><span class="arrow"><sap-icon name="chevDown"></sap-icon></span></div>
            <div class="bar hbar"><span class="arrow"><sap-icon name="chevLeft"></sap-icon></span><span class="thumb"></span><span class="rest"></span><span class="arrow"><sap-icon name="chevRight"></sap-icon></span></div>
            <div class="grip"><svg viewBox="0 0 9 9"><path d="M6 0h2v2H6zM3 3h2v2H3zM6 3h2v2H6zM0 6h2v2H0zM3 6h2v2H3zM6 6h2v2H6z" /></svg></div>
          </div>
        </div>
      </div>
      <footer class="taskbar">
        <div class="apps">${APPS.map((n, i) => html`<button aria-label=${n} class=${classMap({ app: true, glyph: i < 2, open: i > 1, current: n === "rdp" })}><sap-icon name=${n}></sap-icon></button>`)}</div>
        <div class="tray">
          ${["up", "camera", "mic", "pen", "battery", "wifi", "sound"].map((n) => html`<sap-icon name=${n}></sap-icon>`)}
          <div class="clock">4:44 PM<br />27/11/2021</div>
          <div class="notes"><svg viewBox="0 0 18 16"><path fill-rule="evenodd" d="M1 0h16v13H9l-3 3v-3H1zM4 3v1h10V3zM4 6v1h10V6zM4 9v1h7V9z" /></svg><span class="badge">4</span></div>
        </div>
      </footer>
      <div class="recorder"><div class="time">5:37</div><button class="stop" aria-label="Stop recording"><i></i></button></div>
    `;
  }
}
